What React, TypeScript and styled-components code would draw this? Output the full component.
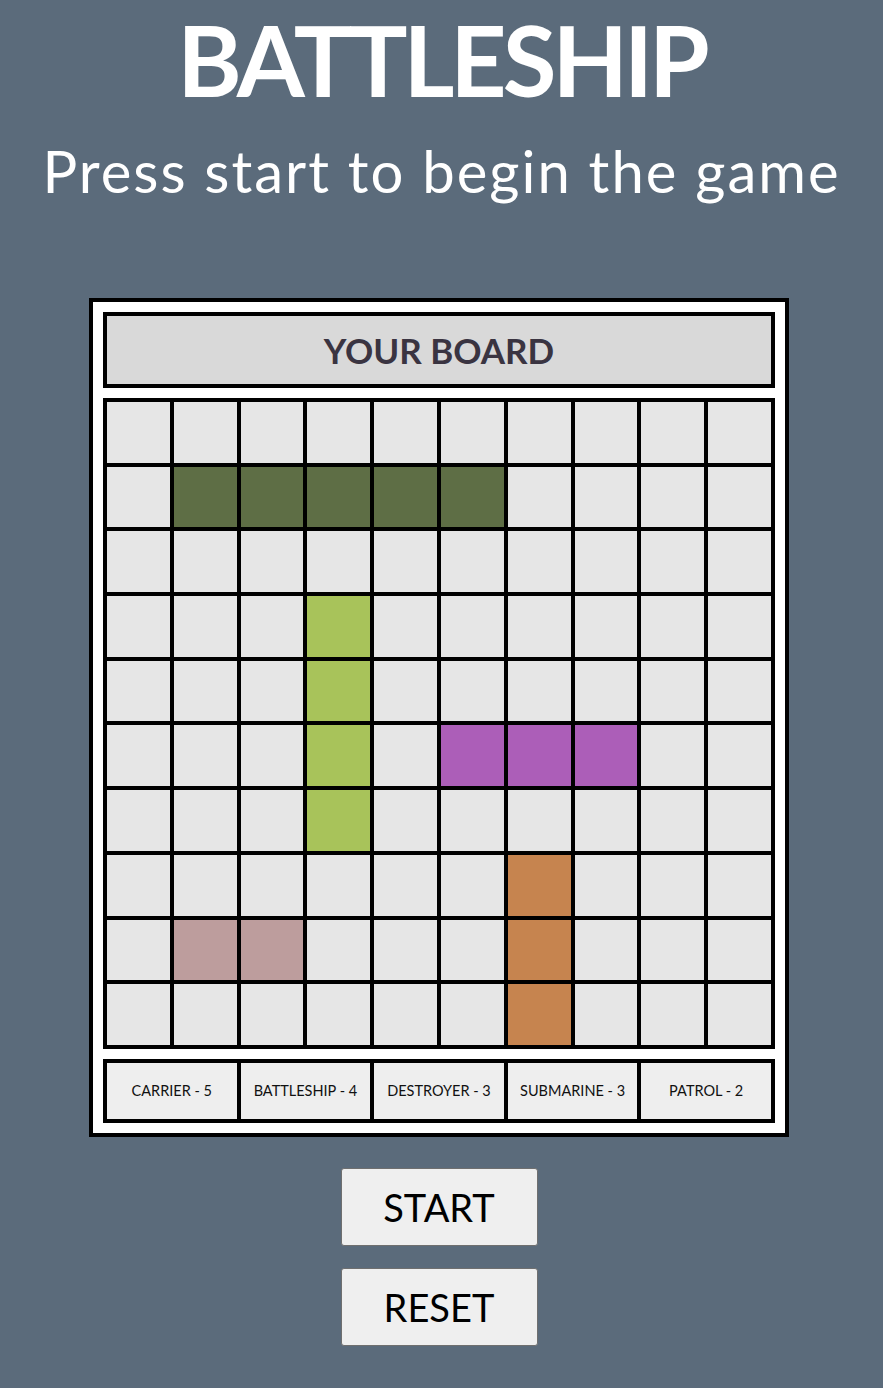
import React from "react";
import styled, { createGlobalStyle } from "styled-components";

const GlobalStyle = createGlobalStyle`
  html, body {
    margin: 0;
    padding: 0;
    background: #5b6b7b;
  }
  body {
    font-family: "Lato", "Noto Sans", sans-serif;
  }
`;

const Page = styled.div`
  display: flex;
  flex-direction: column;
  align-items: center;
  min-height: 1388px;
  color: #fff;
`;

const Title = styled.h1`
  margin: 0;
  font-size: 98px;
  font-weight: 700;
  line-height: 118px;
  letter-spacing: -4px;
  color: #fff;
`;

const Subtitle = styled.h2`
  margin: 0;
  margin-top: 18px;
  font-size: 58px;
  font-weight: 400;
  line-height: 70px;
  letter-spacing: 2px;
  color: #fff;
`;

const Board = styled.div`
  margin-top: 92px;
  margin-right: 5px;
  width: 700px;
  box-sizing: border-box;
  border: 4px solid #000;
  background: #fff;
  padding: 10px;
  display: flex;
  flex-direction: column;
  gap: 10px;
`;

const Header = styled.div`
  height: 76px;
  box-sizing: border-box;
  border: 4px solid #000;
  background: #d9d9d9;
  display: flex;
  align-items: center;
  justify-content: center;
  font-size: 35px;
  font-weight: 700;
  color: #3a3441;
`;

const Grid = styled.div`
  border: 2px solid #000;
  display: grid;
  grid-template-columns: repeat(10, 1fr);
  grid-auto-rows: 64.7px;
`;

const Cell = styled.div<{ $color: string }>`
  box-sizing: border-box;
  border: 2px solid #000;
  background: ${(p) => p.$color};
`;

const Legend = styled.div`
  border: 2px solid #000;
  display: grid;
  grid-template-columns: repeat(5, 1fr);
  height: 64px;
  box-sizing: border-box;
`;

const LegendItem = styled.div`
  box-sizing: border-box;
  border: 2px solid #000;
  background: #eeeeee;
  display: flex;
  align-items: center;
  justify-content: center;
  font-size: 14.5px;
  color: #111;
`;

const Buttons = styled.div`
  margin-top: 31px;
  margin-right: 5px;
  display: flex;
  flex-direction: column;
  gap: 22px;
  align-items: center;
`;

const Button = styled.button`
  width: 197px;
  height: 78px;
  box-sizing: border-box;
  border: 1px solid #6f6f6f;
  border-radius: 3px;
  background: #efefef;
  font-family: "Lato", "Noto Sans", sans-serif;
  font-size: 38px;
  color: #000;
  cursor: pointer;
`;

const EMPTY = "#e6e6e6";
const COLORS: Record<string, string> = {
  c: "#5e6e45",
  b: "#a8c35a",
  d: "#ac5eb8",
  s: "#c6844f",
  p: "#bd9d9d",
};

const ships: [string, number, number, number, boolean][] = [
  ["c", 1, 1, 5, true],
  ["b", 3, 3, 4, false],
  ["d", 5, 5, 3, true],
  ["s", 7, 6, 3, false],
  ["p", 8, 1, 2, true],
];

function buildBoard(): string[][] {
  const board = Array.from({ length: 10 }, () => Array(10).fill(EMPTY));
  ships.forEach(([k, r, c, len, horiz]) => {
    for (let i = 0; i < len; i++) {
      const rr = horiz ? r : r + i;
      const cc = horiz ? c + i : c;
      board[rr][cc] = COLORS[k];
    }
  });
  return board;
}

const legend = ["CARRIER - 5", "BATTLESHIP - 4", "DESTROYER - 3", "SUBMARINE - 3", "PATROL - 2"];

export default function App() {
  const board = buildBoard();
  return (
    <>
      <GlobalStyle />
      <Page>
        <Title>BATTLESHIP</Title>
        <Subtitle>Press start to begin the game</Subtitle>
        <Board>
          <Header>YOUR BOARD</Header>
          <Grid>
            {board.flatMap((row, r) =>
              row.map((color, c) => <Cell key={`${r}-${c}`} $color={color} />)
            )}
          </Grid>
          <Legend>
            {legend.map((l) => (
              <LegendItem key={l}>{l}</LegendItem>
            ))}
          </Legend>
        </Board>
        <Buttons>
          <Button>START</Button>
          <Button>RESET</Button>
        </Buttons>
      </Page>
    </>
  );
}
